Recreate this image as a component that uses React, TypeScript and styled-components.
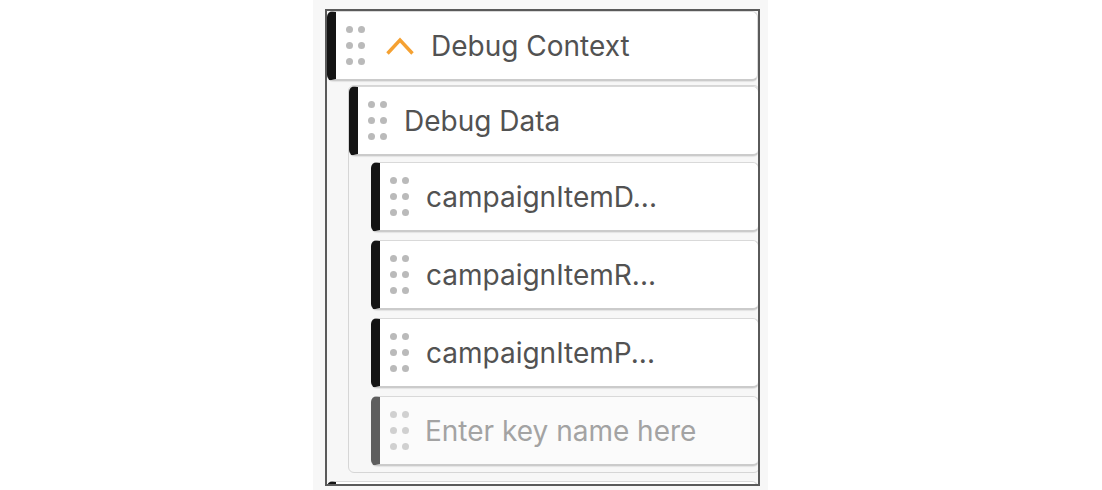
import React from "react";
import styled, { createGlobalStyle } from "styled-components";

const GlobalStyle = createGlobalStyle`
  html, body { margin: 0; padding: 0; background: #ffffff; }
  * { box-sizing: border-box; }
`;

const Page = styled.div`
  width: 1102px;
  height: 490px;
  display: flex;
  overflow: hidden;
  font-family: Inter, "Liberation Sans", sans-serif;
`;

const Column = styled.div`
  margin-left: 313px;
  width: 455px;
  height: 490px;
  background: #f7f7f7;
  padding: 9px 0 0 12px;
`;

const Frame = styled.div`
  width: 435px;
  height: 477px;
  border: 2px solid #5a5a5a;
  background: #f7f7f7;
  overflow: hidden;
  display: flex;
  flex-direction: column;
`;

const Group = styled.div<{ $bordered?: boolean }>`
  flex: none;
  display: flex;
  flex-direction: column;
  gap: ${(p) => (p.$bordered ? "0" : "8px")};
  margin-left: ${(p) => (p.$bordered ? "21px" : "22px")};
  margin-top: ${(p) => (p.$bordered ? "4px" : "6px")};
  margin-right: ${(p) => (p.$bordered ? "-2px" : "0")};
  padding-bottom: ${(p) => (p.$bordered ? "6px" : "0")};
  border: ${(p) => (p.$bordered ? "1px solid #d6d6d6" : "none")};
  border-radius: 6px;
`;

const Row = styled.div<{ $empty?: boolean; $gapTop?: number }>`
  flex: none;
  height: 70px;
  display: flex;
  align-items: center;
  padding-left: 10px;
  margin-top: ${(p) => (p.$gapTop ? `${p.$gapTop}px` : "0")};
  background: ${(p) => (p.$empty ? "#fbfbfb" : "#ffffff")};
  border: 1px solid #d9d9d9;
  border-bottom: 2px solid #cbcbcb;
  border-left: 9px solid ${(p) => (p.$empty ? "#5e5e5e" : "#141414")};
  border-radius: 6px;
  box-shadow: 0 1px 1px rgba(0, 0, 0, 0.08);
`;

const Dots = styled.div<{ $light?: boolean }>`
  flex: none;
  display: grid;
  grid-template-columns: 7px 7px;
  grid-auto-rows: 7px;
  column-gap: 5px;
  row-gap: 9px;
  & > span {
    width: 7px;
    height: 7px;
    border-radius: 50%;
    background: ${(p) => (p.$light ? "#d0d0d0" : "#bababa")};
  }
`;

const Chevron = styled.svg`
  flex: none;
  width: 28px;
  height: 18px;
  margin-left: 21px;
`;

const Label = styled.span`
  margin-left: 17px;
  font-size: 28px;
  color: #525252;
  white-space: nowrap;
`;

const KeyInput = styled.input`
  margin-left: 16px;
  flex: 1;
  min-width: 0;
  border: none;
  outline: none;
  background: transparent;
  font-family: Inter, "Liberation Sans", sans-serif;
  font-size: 28px;
  color: #525252;
  padding: 0;
  &::placeholder {
    color: #a3a3a3;
  }
`;

const Handle = ({ light }: { light?: boolean }) => (
  <Dots $light={light}>
    <span />
    <span />
    <span />
    <span />
    <span />
    <span />
  </Dots>
);

export default function App() {
  return (
    <Page>
      <GlobalStyle />
      <Column>
        <Frame>
          <Row>
            <Handle />
            <Chevron viewBox="0 0 28 18">
              <polyline
                points="1.5,16.5 14,3 26.5,16.5"
                fill="none"
                stroke="#f5a132"
                strokeWidth="3.4"
              />
            </Chevron>
            <Label>Debug Context</Label>
          </Row>
          <Group $bordered>
            <Row>
              <Handle />
              <Label>Debug Data</Label>
            </Row>
            <Group>
              <Row>
                <Handle />
                <Label>campaignItemD...</Label>
              </Row>
              <Row>
                <Handle />
                <Label>campaignItemR...</Label>
              </Row>
              <Row>
                <Handle />
                <Label>campaignItemP...</Label>
              </Row>
              <Row $empty>
                <Handle light />
                <KeyInput placeholder="Enter key name here" />
              </Row>
            </Group>
          </Group>
          <Row $gapTop={8} />
        </Frame>
      </Column>
    </Page>
  );
}
